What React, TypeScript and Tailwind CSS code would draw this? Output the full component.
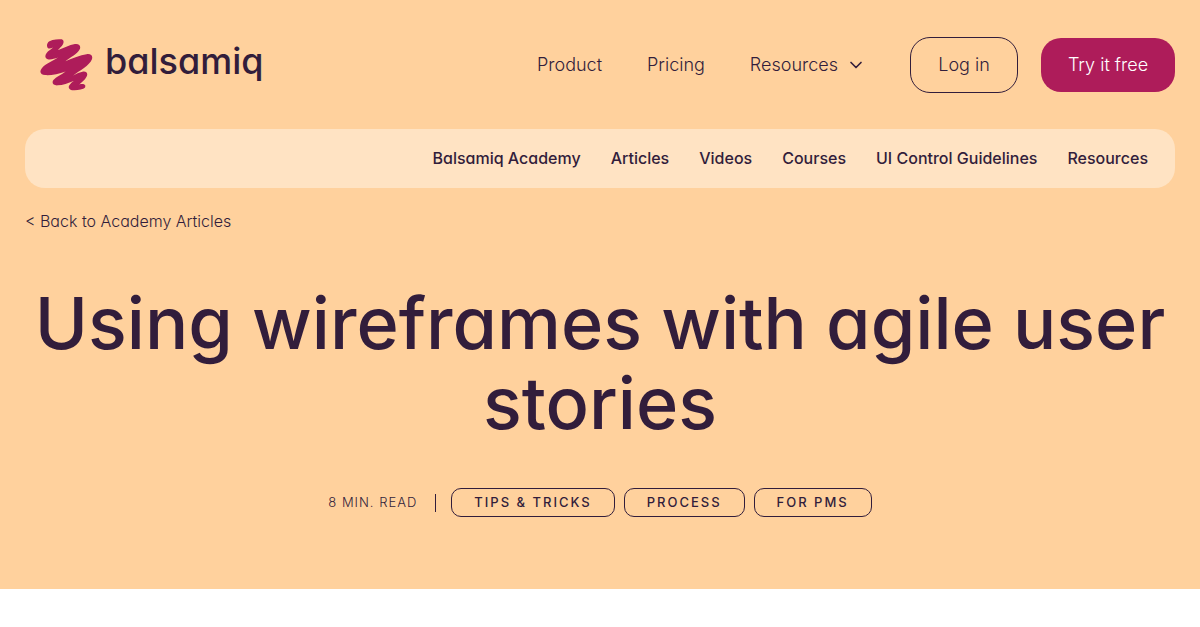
import { ChevronDown } from "lucide-react";

const academyLinks = [
  "Balsamiq Academy",
  "Articles",
  "Videos",
  "Courses",
  "UI Control Guidelines",
  "Resources",
];

const tags = ["Tips & Tricks", "Process", "For PMs"];

function Logo() {
  return (
    <a href="#home" aria-label="balsamiq" className="flex items-center gap-3">
      <svg viewBox="44 41 159 157" className="h-[52px] w-[53px] fill-[#ae1c5a]" aria-hidden="true">
        <path d="M68 69 C63 65 63 53 72 48 C84 42 99 42 109 42 C116 44 116 53 112 58 C108 64 102 69 97 75 C114 68 132 59 149 56 C163 54 168 63 163 73 C157 85 136 97 120 108 C142 99 165 90 184 87 C198 85 204 92 200 103 C193 121 163 137 143 151 C154 146 164 141 174 139 C185 138 189 146 184 155 C178 166 170 171 162 178 C170 176 177 176 180 181 C181 187 179 190 174 191 C164 194 150 196 140 196 C130 194 127 185 134 178 C137 174 141 171 145 168 C129 174 112 181 97 181 C83 182 78 173 84 165 C92 155 109 148 121 139 C100 146 74 152 59 150 C44 149 41 138 49 129 C60 115 82 108 98 97 C87 101 75 104 67 102 C58 100 58 91 63 84 C68 77 76 73 83 67 C77 69 72 71 68 69 Z" />
      </svg>
      <span className="pb-2 text-4xl font-medium">balsamiq</span>
    </a>
  );
}

export default function App() {
  return (
    <div className="min-h-screen bg-white font-['Inter',sans-serif] text-[#321d3b] [font-feature-settings:'cv11']">
      <div className="bg-[#ffd19d] px-[25px] pt-[37px] pb-[72px]">
        <header className="flex h-14 items-center justify-between pl-[15px]">
          <Logo />
          <div className="flex items-center">
            <nav aria-label="Main" className="mr-11 flex items-center gap-[45px] text-lg font-light">
              <a href="#product">Product</a>
              <a href="#pricing">Pricing</a>
              <button type="button" className="flex items-center gap-2">
                Resources
                <ChevronDown className="size-5" strokeWidth={2} aria-hidden="true" />
              </button>
            </nav>
            <div className="flex items-center gap-[23px] text-lg font-light">
              <a
                href="#login"
                className="flex h-14 w-[108px] items-center justify-center rounded-[20px] border border-[#321d3b]"
              >
                Log in
              </a>
              <a
                href="#try"
                className="flex h-[54px] w-[134px] items-center justify-center rounded-[20px] bg-[#ae1c5a] text-white"
              >
                Try it free
              </a>
            </div>
          </div>
        </header>

        <nav
          aria-label="Academy"
          className="mt-9 flex h-[59px] items-center justify-end gap-[30px] rounded-[20px] bg-[#ffe3c3] px-[27px] pb-0.5 text-base font-medium"
        >
          {academyLinks.map((label) => (
            <a key={label} href="#academy">
              {label}
            </a>
          ))}
        </nav>

        <main>
          <a href="#articles" className="mt-[21px] inline-block text-base leading-6 font-light">
            &lt; Back to Academy Articles
          </a>
          <h1 className="mt-[50px] text-center text-[72px] leading-[80px] font-medium">
            Using wireframes with agile user stories
          </h1>
          <div className="mt-[45px] flex items-center justify-center text-[13px] uppercase">
            <span className="mr-[18px] font-light tracking-[1px]">8 min. read</span>
            <span className="mr-[15px] h-[18px] w-px bg-[#321d3b]" />
            <ul className="flex gap-[9px]">
              {tags.map((tag) => (
                <li key={tag}>
                  <a
                    href="#tag"
                    className="flex h-[29px] items-center rounded-[10px] border border-[#321d3b] px-[22px] font-medium tracking-[2px]"
                  >
                    {tag}
                  </a>
                </li>
              ))}
            </ul>
          </div>
        </main>
      </div>
    </div>
  );
}
